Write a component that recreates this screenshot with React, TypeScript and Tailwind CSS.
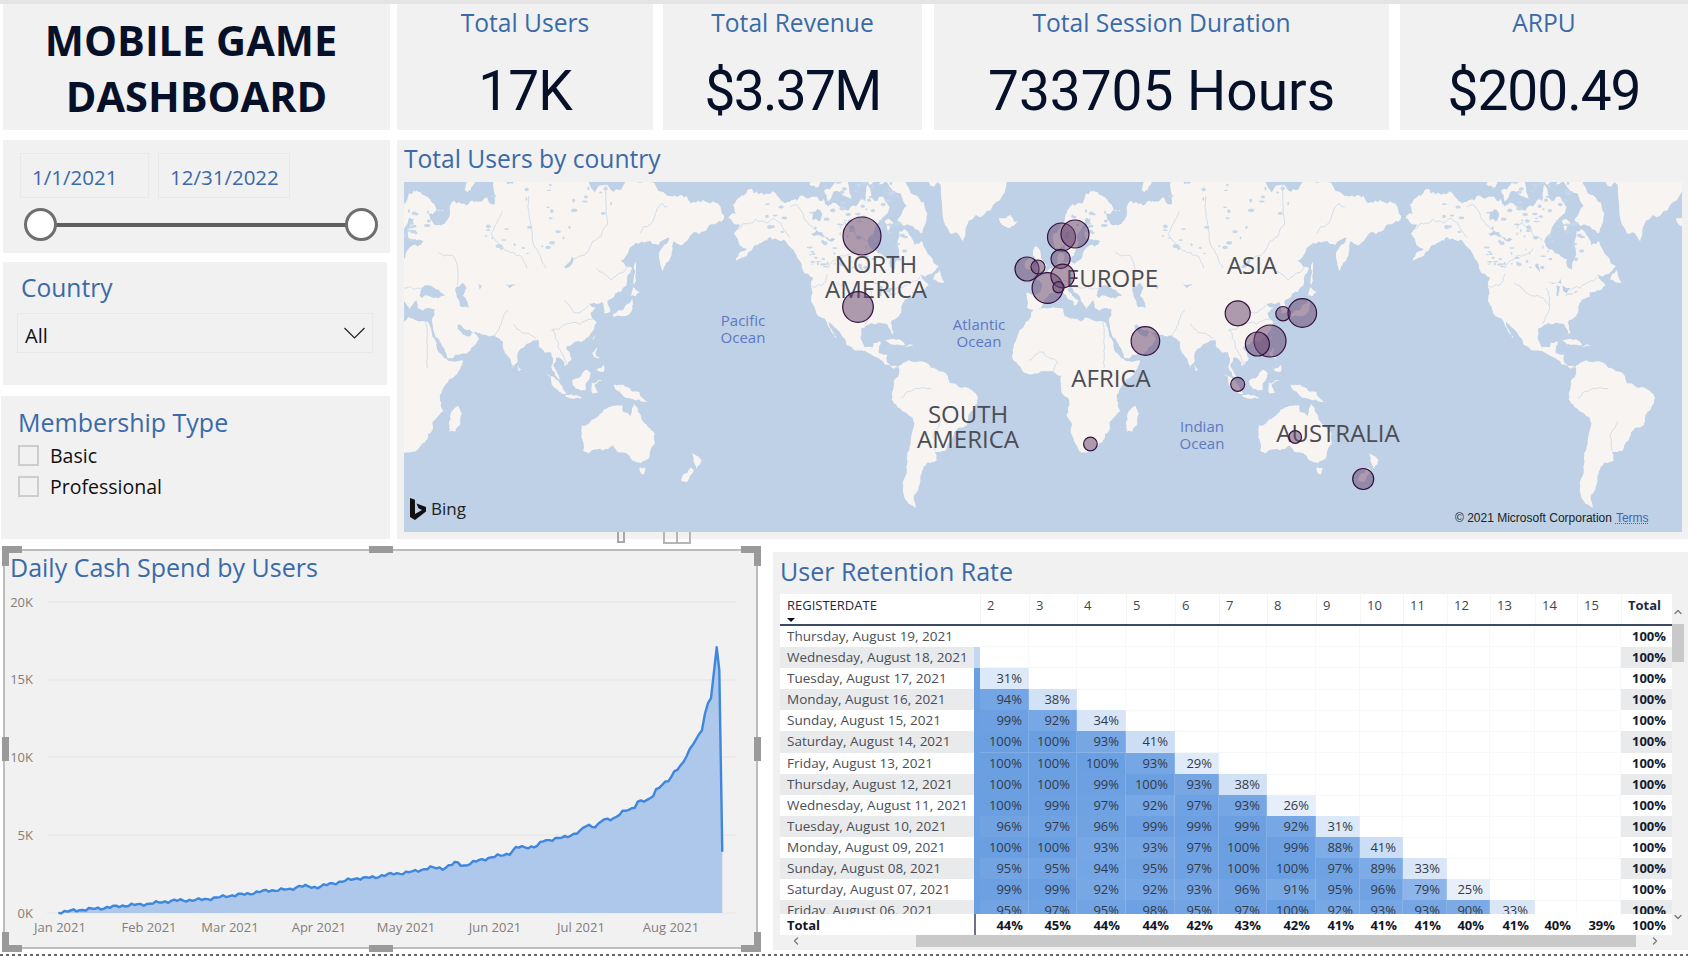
import React from "react";
import { ChevronUp, ChevronDown, ChevronLeft, ChevronRight } from "lucide-react";

type P = [number, number];
const LAND: P[][] = [
  // North America
  [[-168,65.5],[-164,66.5],[-166,68.5],[-161,70],[-156,71.3],[-150,70.5],[-141,69.7],[-135,69],[-128,70],[-120,69.5],[-115,68],[-108,68],[-100,68],[-95,69],[-94,72],[-90,69],[-85,69.5],[-82,68],[-87,65],[-90,63.5],[-94,60],[-93,58.5],[-88,56.5],[-82,55],[-82,52.5],[-79.5,51.5],[-79,54],[-77,56],[-78,59],[-77,62.5],[-72,62],[-69,59],[-65,60],[-61,56],[-56,52.5],[-60,50],[-66,50],[-65,48.5],[-61,46],[-66,44],[-70,43.5],[-70,41.5],[-74,40.5],[-76,37],[-76,35],[-81,31.5],[-80,26],[-81,25],[-82.5,28],[-84,30],[-89,30],[-94,29.5],[-97,28],[-97.5,23],[-95,18.5],[-91,18.5],[-90.5,21],[-87,21.5],[-88,16],[-83.5,15],[-83.5,11],[-80,9],[-77.5,8.5],[-80,7.5],[-85,10],[-88,13],[-94,16],[-100,17],[-105,20],[-106,23],[-112,29],[-114.5,31],[-112,26],[-110,23],[-112,25],[-115,29],[-117,32.5],[-121,34.5],[-124,40],[-124,46],[-123,49],[-128,51],[-131,55],[-135,58.5],[-140,60],[-146,61],[-152,59],[-158,56],[-164,54.5],[-158,58],[-162,59],[-165,62],[-161,64]],
  // South America
  [[-77.5,8.5],[-72,12],[-68,11],[-62,10.5],[-60,8],[-52,5],[-50,0],[-44,-2.5],[-37,-5],[-35,-8],[-39,-15],[-41,-22],[-48,-25.5],[-49,-29],[-53,-34],[-58,-34.5],[-57,-38],[-62,-39],[-65,-43],[-66,-47],[-69,-51],[-68,-55],[-72,-54],[-75,-50],[-73,-42],[-73,-37],[-71,-30],[-70,-18],[-76,-14],[-81,-6],[-80,-2],[-80,1],[-78,3],[-77,7]],
  // Africa
  [[-6,35.8],[3,37],[10,37],[11,33.5],[15,32.5],[20,31],[22,33],[32,31],[34,28],[37,21],[39,15.5],[43,12],[51,12],[47,4],[41,-2],[39,-6],[40.5,-15],[35,-20],[35,-24],[32.5,-26],[31,-30],[26,-34],[20,-34.8],[18,-33],[15,-27],[12,-17],[13.5,-10],[9,-1],[9.5,4],[5,6],[-4,5],[-8,4.5],[-13,9],[-17,14.5],[-16,20],[-13,27],[-9.5,31]],
  // Eurasia
  [[-9,37],[-9.5,43],[-2,43.5],[-1,46],[-4.5,48.5],[2,51],[7,53.5],[8.5,57],[11,56],[10,54],[14,54],[19,54.5],[21,57],[24,59],[30,60],[23,60],[21.5,63],[25,65.5],[22,65.5],[17.5,61],[18.5,59.5],[16,56],[13,55.5],[11,59],[6,58],[5,62],[11,65],[15,68.5],[25,71],[31,70],[41,67],[33,66.5],[38,64],[44,66],[44,68],[54,68.5],[60,69],[68,68.5],[67,72],[72,73],[75,72],[80,73.5],[90,75],[105,77],[113,74],[130,71],[140,72.5],[160,70],[170,70],[180,69],[190,66],[186,64.5],[179,62.5],[170,60],[163,60],[162,56],[157,51],[155.5,57],[163,62],[155,59],[143,59.5],[135,54.5],[141,52],[138,46],[132,43],[128,40],[129.5,36],[126.5,34.5],[126,37.5],[125,39.5],[121.5,39],[118,39],[122,37],[119,35],[122,31],[121,28],[117,23.5],[110,21],[106,19],[109,13],[105,9],[103,13],[100.5,13.5],[99,9],[103.5,1.5],[101,3],[98,8.5],[98,16],[94.5,16],[91,22.5],[87,21],[80,15],[80,11],[77.5,8],[73,17],[72.5,21],[67,24.5],[61,25],[57,26],[52,27.5],[49,30],[48,29],[51,25],[54,24],[56,26],[59.5,22.5],[55,17],[45,13],[43,13],[39,21],[35,28],[34.5,31],[36,36.5],[30,36],[27,37],[26.5,40],[24,38],[22.5,36.5],[20,39.5],[19,42],[14,45.5],[12.5,44.5],[16,41.5],[18.5,40],[16,38],[15.5,40],[10.5,43],[7,43.8],[3,43],[0,39.5],[-2,36.8],[-5.5,36]],
  [[-5.5,50],[1,51.2],[1.5,53],[-1.5,55],[-2,57.5],[-5,58.5],[-6,56],[-3,54],[-5,52],[-3.5,51.3]],
  [[-10,52],[-6,52],[-5.5,54.5],[-8,55.2],[-10,54]],
  [[-24,65.5],[-18,66.3],[-14,65],[-18,63.4],[-22,64]],
  [[-73,78],[-60,82],[-30,83],[-20,80],[-20,72],[-25,69],[-40,65],[-43,60],[-50,62],[-54,67],[-55,72],[-68,76]],
  [[-80,73.7],[-72,71.5],[-62,66.5],[-65,62],[-72,64],[-78,65],[-73,68],[-88,72]],
  [[-117,71],[-105,73],[-102,69.5],[-115,69]],
  [[-125,72],[-118,74.5],[-116,73],[-120,71.5]],
  [[-97,75],[-85,74],[-90,72.5]],
  [[-110,76],[-100,76],[-105,74.5]],
  [[-85,65],[-80,64.5],[-83,62.5]],
  [[-59,48],[-55.5,51.5],[-53,47],[-56,47]],
  [[-85,22],[-80,23],[-74,20],[-78,20]],
  [[-74,19],[-68.5,18.5],[-70,19.8],[-72,20]],
  [[130.5,33.5],[135,33.5],[140,35],[141.5,39],[141,41],[139.5,39],[136,36],[131,34.5]],
  [[140,42],[141.5,45.5],[145,43.5],[143,42]],
  [[142,46],[143,50],[143,54],[142,53],[141.8,48]],
  [[120,23],[121.5,25],[121,22]],
  [[120,16],[122,18.5],[122,14],[124,13],[121,13.5]],
  [[122,7],[126,9.5],[126,6],[124,6]],
  [[109,1],[113,3],[117,7],[119,5],[117.5,1],[116,-4],[111,-3]],
  [[95.5,5.5],[100,2.5],[104,-2],[106,-6],[102,-4.5],[98,1]],
  [[105.5,-6.5],[111,-6.5],[114.5,-8],[106,-7.5]],
  [[119.5,0],[125,1.5],[121,0],[123,-5],[120,-5.5]],
  [[131,-1],[138,-2],[145,-5],[151,-10.5],[147,-10],[142,-9],[138,-8],[133,-4]],
  [[114,-22],[122,-18],[126,-14],[131,-12],[136,-12],[136,-15],[140,-17.5],[142,-11],[146,-19],[153,-26],[153,-31],[150,-37],[146,-39],[141,-38],[138,-35],[135,-34.5],[131,-31.5],[124,-33],[118,-35],[115,-34],[114,-27]],
  [[145,-41],[148,-41],[147.5,-43.5],[146,-43.5]],
  [[173,-35],[178,-38],[175,-41.5],[174,-39]],
  [[172,-41],[174,-42],[170,-46.5],[167,-46],[168,-44]],
  [[49,-12],[50.5,-16],[47,-25],[44,-25],[43.5,-21],[44.5,-16]],
  [[80,9.5],[82,7],[80.5,6]],
  [[52,71],[56,74],[68,77],[60,75],[55,71]],
];
const WATER: P[][] = [
  [[28,42],[28.5,44],[30.5,46],[33,46],[36,45],[38,44.5],[41.5,42],[38,41],[33,42],[29,41.2]],
  [[47,45],[51,47],[53,45],[51,42],[53,40],[54,37],[50,37.5],[49,40],[47.5,43]],
  [[-92,47],[-85,48.5],[-85,46.5],[-89,46.5]],
  [[-87.5,46],[-85.5,45.5],[-86.5,42],[-87.5,42]],
  [[-84,46],[-80,45],[-82,43],[-84,44]],
  [[-83,42],[-76,44],[-79,43]],
  [[-124,62],[-118,62],[-111,60.5],[-117,61]],
  [[-123,67],[-118,66.5],[-119,65],[-123,65]],
  [[-99,53],[-97,53.5],[-96.5,50.5]],
  [[59,46.5],[61,46],[60,44.5]],
  [[104,52],[109,55.5],[110,55],[106,52]],
  [[74,46.5],[79,46.5],[76,45]],
];
const RIVERS: P[][] = [
  [[72,67],[66,62],[70,59],[78,57],[85,52]],
  [[86,70],[88,62],[92,56],[95,52]],
  [[127,72],[128,64],[120,60],[110,55]],
  [[48,46],[48,53],[45,56],[38,57]],
  [[-135,68],[-125,64],[-118,61]],
  [[-163,63],[-150,65],[-140,64.5],[-135,61]],
  [[-95,30],[-91,38],[-93,45]],
  [[-91,38],[-100,42],[-110,47]],
  [[-60,-3],[-70,-4],[-76,-8]],
  [[120,32],[106,30],[98,27]],
  [[118,38],[110,35],[105,40]],
  [[5,6],[7,11],[0,16],[-8,12]],
  [[31,31],[32,20],[32,8]],
  [[140,53],[130,48],[122,52]],
  [[160,68],[150,64],[145,62]],
  [[68,24],[72,32],[75,36]],
  [[90,23],[82,26],[78,30]],
  [[106,10],[102,18],[99,28]],
  [[29,45],[20,45],[10,48]],
  [[-66,49],[-75,45],[-80,44]],
  [[-124,46],[-118,46],[-115,50]],
  [[-58,-34],[-59,-27],[-55,-20]],
  [[-100,58],[-110,55],[-115,52]],
  [[-95,60],[-102,64],[-110,64]],
];

const hash = (i: number) => {
  const v = Math.sin(i * 12.9898) * 43758.5453;
  return v - Math.floor(v);
};
let seed = 1;
const rough = (pts: P[], closed: boolean, levels = 3): P[] => {
  let cur = pts;
  for (let l = 0; l < levels; l++) {
    const next: P[] = [];
    const n = cur.length;
    const end = closed ? n : n - 1;
    for (let i = 0; i < end; i++) {
      const a = cur[i];
      const b = cur[(i + 1) % n];
      next.push(a);
      const dx = b[0] - a[0];
      const dy = b[1] - a[1];
      const k = (hash(seed++) - 0.5) * 0.32;
      next.push([(a[0] + b[0]) / 2 - dy * k, (a[1] + b[1]) / 2 + dx * k]);
    }
    if (!closed) next.push(cur[n - 1]);
    cur = next;
  }
  return cur;
};

const lx = (lon: number, off: number) => 640 + lon * 1.88 + off;
const ly = (lat: number) => 201 - 107.7 * Math.log(Math.tan(Math.PI / 4 + (Math.min(lat, 84) * Math.PI) / 360));
const OFFS = [-677, 0, 677];
const toD = (pts: P[], closed: boolean) => {
  const base = "M" + pts.map(([a, b]) => `${lx(a, 0).toFixed(1)} ${ly(b).toFixed(1)}`).join("L") + (closed ? "Z" : "");
  return base;
};
const landD = LAND.map((p) => toD(rough(p, true), true)).join("");
const waterD = WATER.map((p) => toD(rough(p, true, 2), true)).join("");
const riverD = RIVERS.map((p) => toD(rough(p, false, 3), false)).join("");

const LAKE_BOXES: [number, number, number, number, number][] = [
  [-125, -72, 52, 68, 70],
  [-110, -78, 68, 73, 25],
  [22, 33, 60, 68, 16],
  [12, 20, 59, 66, 8],
  [60, 130, 56, 72, 36],
  [-150, -135, 62, 69, 8],
];
const lakes: [number, number, number, number][] = [];
LAKE_BOXES.forEach(([a, b, c, d, n]) => {
  for (let i = 0; i < n; i++) {
    const lon = a + (b - a) * hash(seed++);
    const lat = c + (d - c) * hash(seed++);
    lakes.push([lx(lon, 0), ly(lat), 0.7 + hash(seed++) * 2.6, 0.6 + hash(seed++) * 1.4]);
  }
});

const BUBBLES: [number, number, number][] = [
  [862,236,19],[858,307,15.3],[1027,269,12],[1047.5,288,15.4],[1061.5,237,14],[1075,234,14],[1060.6,259,9.6],[1062.7,276,11.8],[1058.5,287.3,5.6],[1038,267,7],
  [1145.4,341,14.3],[1237.7,313.3,12.5],[1283,313.7,7.2],[1302.3,313,14.3],[1270,341,16],[1257.4,344,12],[1237.7,384.3,7],[1090.4,444,6.8],[1295.2,437,6.3],[1363.2,479,10.5],
];

const WorldMap = () => (
  <div className="relative mt-[6px] h-[350px] w-[1278px] overflow-hidden bg-[#bed1e6] font-['Open_Sans',sans-serif]">
    <svg className="absolute inset-0" width="1278" height="350" viewBox="0 0 1278 350">
      {OFFS.map((o) => (
        <g key={o} transform={`translate(${o} 0)`}>
          <path d={landD} fill="#f7f4f1" />
          <path d={riverD} fill="none" stroke="#cddbea" strokeWidth="0.9" />
          <path d={waterD} fill="#bed1e6" />
          {lakes.map(([x, y, rx, ry], i) => (
            <ellipse key={i} cx={x} cy={y} rx={rx} ry={ry} fill="#c6d7e9" />
          ))}
        </g>
      ))}
    </svg>
    <span className="absolute left-[472px] top-[94px] -translate-x-1/2 -translate-y-1/2 text-center text-[24px] leading-[25px] text-[#4c4c54]">NORTH<br />AMERICA</span>
    <span className="absolute left-[564px] top-[244px] -translate-x-1/2 -translate-y-1/2 text-center text-[24px] leading-[25px] text-[#4c4c54]">SOUTH<br />AMERICA</span>
    <span className="absolute left-[708px] top-[95px] -translate-x-1/2 -translate-y-1/2 text-[24px] leading-[25px] text-[#4c4c54]">EUROPE</span>
    <span className="absolute left-[848px] top-[82px] -translate-x-1/2 -translate-y-1/2 text-[24px] leading-[25px] text-[#4c4c54]">ASIA</span>
    <span className="absolute left-[707px] top-[195px] -translate-x-1/2 -translate-y-1/2 text-[24px] leading-[25px] text-[#4c4c54]">AFRICA</span>
    <span className="absolute left-[934px] top-[250px] -translate-x-1/2 -translate-y-1/2 text-[24px] leading-[25px] text-[#4c4c54]">AUSTRALIA</span>
    <span className="absolute left-[339px] top-[147px] -translate-x-1/2 -translate-y-1/2 text-center text-[15px] leading-[17px] text-[#5f78c4]">Pacific<br />Ocean</span>
    <span className="absolute left-[575px] top-[151px] -translate-x-1/2 -translate-y-1/2 text-center text-[15px] leading-[17px] text-[#5f78c4]">Atlantic<br />Ocean</span>
    <span className="absolute left-[798px] top-[253px] -translate-x-1/2 -translate-y-1/2 text-center text-[15px] leading-[17px] text-[#5f78c4]">Indian<br />Ocean</span>
    <svg className="absolute inset-0" width="1278" height="350" viewBox="404 182 1278 350">
      {BUBBLES.map(([x, y, r], i) => (
        <circle key={i} cx={x} cy={y} r={r} fill="#6a4670" fillOpacity="0.52" stroke="#34103f" strokeWidth="1.2" />
      ))}
    </svg>
    <div className="absolute left-[6px] top-[316px] flex items-center gap-[5px]">
      <svg width="16" height="22" viewBox="0 0 16 22"><path d="M0 0L5 1.7V16L12 12L8.5 10.3L6.5 5.5L16 9V13.5L5 22L0 19Z" fill="#111" /></svg>
      <span className="text-[17px] leading-[22px] text-[#222]">Bing</span>
    </div>
    <div className="absolute left-[1051px] top-[329px] flex gap-[4px] font-['Liberation_Sans',sans-serif] text-[12px] leading-[14px] text-[#222]">
      <span>© 2021 Microsoft Corporation</span>
      <span className="text-[#3f66b5] underline decoration-dotted">Terms</span>
    </div>
  </div>
);

const BLUE = "text-[#3a6aa8]";
const Kpi = ({ label, value, cls, vcls }: { label: string; value: string; cls: string; vcls: string }) => (
  <div className={`flex h-full flex-col items-center bg-[#f1f1f1] ${cls}`}>
    <div className={`mt-[2px] font-['Open_Sans',sans-serif] text-[24.6px] leading-[34px] ${BLUE}`}>{label}</div>
    <div className={`mt-[18px] font-['Roboto',sans-serif] text-[55px] leading-[66px] text-[#071029] ${vcls}`}>{value}</div>
  </div>
);

// ---- Chart data
const RAW: P[] = ([
  [175,1147],[240,1140],[300,1135],[370,1127],[440,1122],[520,1112],[590,1110],[640,1105],[680,1098],[740,1092],[800,1082],[870,1078],[900,1068],[950,1072],[1000,1060],[1070,1045],[1130,1042],[1140,1037],
] as P[]).map(([x, y]) => [x / 3, y / 3 + 530] as P).concat(([
  [30,1033],[100,1025],[150,1013],[190,1015],[230,997],[250,1008],[300,990],[390,970],[410,952],[470,950],[490,932],[550,923],[600,905],[620,885],[650,890],[665,872],[700,865],[730,845],[760,835],[775,812],[800,815],[820,795],[830,775],[870,750],[885,720],[905,705],[925,670],[940,640],[965,600],[980,530],[995,500],
] as P[]).map(([x, y]) => [x / 3 + 380, y / 3 + 530] as P));
const series: P[] = (() => {
  const out: P[] = [];
  let j = 0;
  const endX = RAW[RAW.length - 1][0];
  for (let x = RAW[0][0], k = 0; x <= endX; x += 3.05, k++) {
    while (j < RAW.length - 2 && RAW[j + 1][0] < x) j++;
    const [x0, y0] = RAW[j];
    const [x1, y1] = RAW[j + 1];
    const y = y0 + ((y1 - y0) * (x - x0)) / (x1 - x0);
    const n = Math.sin(k * 2.3) * 1.0 + Math.sin(k * 0.9 + 1) * 0.7;
    out.push([x, y + n]);
  }
  out.push([380 + 1010 / 3, 530 + 352 / 3], [380 + 1018 / 3, 530 + 420 / 3], [380 + 1027 / 3, 530 + 965 / 3]);
  return out;
})();
const chartLine = series.map(([x, y]) => `${x.toFixed(1)} ${y.toFixed(1)}`).join("L");
const chartArea = `M${series[0][0].toFixed(1)} 913L${chartLine}L${series[series.length - 1][0].toFixed(1)} 913Z`;

const Handle = ({ cls }: { cls: string }) => <div className={`absolute bg-[#9a9a9a] ${cls}`} />;

const Chart = () => (
  <div className="relative ml-[3px] h-[400px] w-[755px] border-2 border-[#bdbdbd] bg-[#f1f1f1] font-['Open_Sans',sans-serif]">
    <div className={`h-[34px] pl-[5px] text-[25px] leading-[32px] ${BLUE}`}>Daily Cash Spend by Users</div>
    <svg width="751" height="362" viewBox="5 585 751 362" className="block">
      {[602, 680, 757, 835, 913].map((y) => (
        <line key={y} x1="47" x2="736" y1={y} y2={y} stroke="#e9e9e9" strokeWidth="1.5" />
      ))}
      {[["20K", 602], ["15K", 679], ["10K", 757], ["5K", 835], ["0K", 913]].map(([t, y]) => (
        <text key={t} x="33" y={Number(y) + 5} textAnchor="end" fontSize="13" fill="#857d76" fontFamily="Open Sans">{t}</text>
      ))}
      {[["Jan 2021", 60], ["Feb 2021", 149], ["Mar 2021", 230], ["Apr 2021", 319], ["May 2021", 406], ["Jun 2021", 495], ["Jul 2021", 581], ["Aug 2021", 671]].map(([t, x]) => (
        <text key={t} x={x} y="932" textAnchor="middle" fontSize="13" fill="#857d76" fontFamily="Open Sans">{t}</text>
      ))}
      <path d={chartArea} fill="#adc8ea" />
      <path d={`M${chartLine}`} fill="none" stroke="#3f87dd" strokeWidth="2.4" strokeLinejoin="round" />
    </svg>
    <Handle cls="left-[-3px] top-[-5px] h-[7px] w-[20px]" />
    <Handle cls="left-[-3px] top-[-5px] h-[20px] w-[7px]" />
    <Handle cls="left-[364px] top-[-5px] h-[7px] w-[24px]" />
    <Handle cls="right-[-5px] top-[-5px] h-[7px] w-[20px]" />
    <Handle cls="right-[-5px] top-[-5px] h-[20px] w-[7px]" />
    <Handle cls="left-[-3px] top-[186px] h-[24px] w-[7px]" />
    <Handle cls="right-[-5px] top-[186px] h-[24px] w-[7px]" />
    <Handle cls="bottom-[-5px] left-[-3px] h-[7px] w-[20px]" />
    <Handle cls="bottom-[-5px] left-[-3px] h-[20px] w-[7px]" />
    <Handle cls="bottom-[-5px] left-[364px] h-[7px] w-[24px]" />
    <Handle cls="bottom-[-5px] right-[-5px] h-[7px] w-[20px]" />
    <Handle cls="bottom-[-5px] right-[-5px] h-[20px] w-[7px]" />
  </div>
);

// ---- Table
const COLS = "grid grid-cols-[194px_6px_49px_48px_49px_49px_44px_48px_49px_44px_43px_44px_43px_45px_42px_44px_51px]";
const ROWS: [string, number[]][] = [
  ["Thursday, August 19, 2021", []],
  ["Wednesday, August 18, 2021", []],
  ["Tuesday, August 17, 2021", [31]],
  ["Monday, August 16, 2021", [94, 38]],
  ["Sunday, August 15, 2021", [99, 92, 34]],
  ["Saturday, August 14, 2021", [100, 100, 93, 41]],
  ["Friday, August 13, 2021", [100, 100, 100, 93, 29]],
  ["Thursday, August 12, 2021", [100, 100, 99, 100, 93, 38]],
  ["Wednesday, August 11, 2021", [100, 99, 97, 92, 97, 93, 26]],
  ["Tuesday, August 10, 2021", [96, 97, 96, 99, 99, 99, 92, 31]],
  ["Monday, August 09, 2021", [100, 100, 93, 93, 97, 100, 99, 88, 41]],
  ["Sunday, August 08, 2021", [95, 95, 94, 95, 97, 100, 100, 97, 89, 33]],
  ["Saturday, August 07, 2021", [99, 99, 92, 92, 93, 96, 91, 95, 96, 79, 25]],
  ["Friday, August 06, 2021", [95, 97, 95, 98, 95, 97, 100, 92, 93, 93, 90, 33]],
];
const HEAD = ["2", "3", "4", "5", "6", "7", "8", "9", "10", "11", "12", "13", "14", "15"];
const TOTALS = [44, 45, 44, 44, 42, 43, 42, 41, 41, 41, 40, 41, 40, 39];
const cellBg = (v: number) => {
  const t = Math.min(1, Math.max(0, (v - 10) / 90));
  const mix = (c: number) => Math.round(255 + (c - 255) * t);
  return `rgb(${mix(106)},${mix(159)},${mix(226)})`;
};

const Retention = () => (
  <div className="ml-[15px] mt-[3px] h-[398px] flex-1 bg-[#f1f1f1] font-['Open_Sans',sans-serif]">
    <div className={`h-[42px] pl-[7px] text-[25px] leading-[38px] ${BLUE}`}>User Retention Rate</div>
    <div className="flex pl-[7px]">
      <div className="w-[892px] bg-white text-[13px]">
        <div className={`${COLS} h-[32px] border-b-2 border-[#3c4a66] leading-[21px] text-[#3f4652]`}>
          <div className="relative col-span-2 pl-[7px] pt-[1px] text-[#1f2a3f]">
            REGISTERDATE
            <span className="absolute bottom-[2px] left-[7px] h-0 w-0 border-x-[4px] border-t-[4px] border-x-transparent border-t-[#111]" />
          </div>
          {HEAD.map((h) => (
            <div key={h} className="border-l border-[#f5f5f5] pl-[6px] pt-[1px]">{h}</div>
          ))}
          <div className="border-l border-[#f5f5f5] pl-[6px] pt-[1px] font-bold text-[#1f2a3f]">Total</div>
        </div>
        <div className="h-[288px] overflow-hidden">
          {ROWS.map(([d, vals], i) => (
            <div key={d} className={`${COLS} h-[21.1px] leading-[21px]`}>
              <div className={`whitespace-nowrap pl-[7px] text-[13.5px] text-[#4a4e57] ${i % 2 ? "bg-[#e9eaec]" : "bg-white"}`}>{d}</div>
              <div style={{ background: i === 0 ? "#fff" : i === 1 ? "#c3d8f0" : "#6a9fe2" }} />
              {HEAD.map((h, j) => {
                const v = vals[j];
                return v === undefined ? (
                  <div key={h} className="border-b border-r border-[#f8f8f8]" />
                ) : (
                  <div key={h} className="border-b border-r border-white/15 pr-[6px] text-right text-[#333a47]" style={{ background: cellBg(v) }}>{v}%</div>
                );
              })}
              <div className={`pr-[6px] text-right font-bold text-[#151c2e] ${i % 2 ? "bg-[#e9eaec]" : "bg-white"}`}>100%</div>
            </div>
          ))}
        </div>
        <div className={`${COLS} h-[21px] leading-[22px] font-bold text-[#0f172a]`}>
          <div className="pl-[7px]">Total</div>
          <div className="border-l-2 border-[#6a7286]" />
          {TOTALS.map((t, j) => (
            <div key={j} className="pr-[6px] text-right">{t}%</div>
          ))}
          <div className="pr-[6px] text-right">100%</div>
        </div>
      </div>
      <div className="flex h-[341px] w-[12px] flex-col items-center">
        <ChevronUp size={12} className="mt-[12px] text-[#777]" strokeWidth={2.5} />
        <div className="mt-[6px] h-[38px] w-[12px] bg-[#c9c9c9]" />
        <ChevronDown size={12} className="mb-[12px] mt-auto text-[#777]" strokeWidth={2.5} />
      </div>
    </div>
    <div className="flex h-[12px] items-center pl-[7px]">
      <div className="w-[136px] pl-[10px]"><ChevronLeft size={12} className="text-[#777]" strokeWidth={2.5} /></div>
      <div className="h-[12px] w-[720px] bg-[#c9c9c9]" />
      <div className="pl-[13px]"><ChevronRight size={12} className="text-[#777]" strokeWidth={2.5} /></div>
    </div>
  </div>
);

export default function App() {
  return (
    <div className="relative h-[956px] w-[1688px] overflow-hidden bg-white">
      <div className="h-[4px] bg-[#e4e4e4]" />
      <div className="flex h-[126px] pl-[3px]">
        <div className="flex h-full w-[387px] flex-col items-center justify-center bg-[#f1f1f1] pt-[2px] font-['Open_Sans',sans-serif] text-[41.5px] font-bold leading-[56px] text-[#061029]">
          <div className="pr-[11px]">MOBILE GAME</div>
          <div>DASHBOARD</div>
        </div>
        <Kpi label="Total Users" value="17K" cls="ml-[7px] w-[256px]" vcls="tracking-[-1px]" />
        <Kpi label="Total Revenue" value="$3.37M" cls="ml-[10px] w-[259px]" vcls="tracking-[-1.7px]" />
        <Kpi label="Total Session Duration" value="733705 Hours" cls="ml-[12px] w-[455px]" vcls="tracking-normal" />
        <Kpi label="ARPU" value="$200.49" cls="ml-[11px] w-[288px]" vcls="tracking-[-1px]" />
      </div>
      <div className="mt-[10px] flex h-[399px] pl-[3px]">
        <div className="flex w-[387px] flex-col font-['Open_Sans',sans-serif]">
          <div className="h-[113px] bg-[#f1f1f1] px-[17px] pt-[13px]">
            <div className={`flex gap-[9px] text-[20.5px] leading-[47px] ${BLUE}`}>
              <div className="h-[45px] w-[129px] border border-[#e8e8e8] pl-[11px]">1/1/2021</div>
              <div className="h-[45px] w-[132px] border border-[#e8e8e8] pl-[11px]">12/31/2022</div>
            </div>
            <div className="relative ml-[20px] mt-[25px] h-[4px] w-[322px] bg-[#5f5f5f]">
              <span className="absolute left-[-16px] top-[-15px] h-[33px] w-[33px] rounded-full border-[3px] border-[#6e6e6e] bg-white" />
              <span className="absolute right-[-16px] top-[-15px] h-[33px] w-[33px] rounded-full border-[3px] border-[#6e6e6e] bg-white" />
            </div>
          </div>
          <div className="mt-[9px] h-[123px] w-[384px] bg-[#f1f1f1] px-[14px]">
            <div className={`pl-[4px] pt-[9px] text-[24.6px] leading-[34px] ${BLUE}`}>Country</div>
            <div className="mt-[8px] flex h-[40px] w-[356px] items-center justify-between border border-[#e8e8e8] pl-[7px] pr-[7px] text-[20px] text-[#111]">
              <span className="pt-[5px]">All</span>
              <svg width="21" height="12" viewBox="0 0 21 12"><path d="M0.5 1L10.5 11L20.5 1" fill="none" stroke="#222" strokeWidth="1.2" /></svg>
            </div>
          </div>
          <div className="ml-[-2px] mt-[11px] h-[143px] w-[389px] bg-[#f1f1f1] pl-[17px]">
            <div className={`pt-[9px] text-[25px] leading-[34px] ${BLUE}`}>Membership Type</div>
            <div className="mt-[6px] flex flex-col gap-[10px] text-[19.5px] leading-[21px] text-[#111]">
              {["Basic", "Professional"].map((t) => (
                <div key={t} className="flex h-[21px] items-center gap-[11px]">
                  <span className="h-[21px] w-[21px] border-2 border-[#cdcdcd]" />
                  <span>{t}</span>
                </div>
              ))}
            </div>
          </div>
        </div>
        <div className="relative ml-[7px] flex-1 bg-[#f1f1f1] pl-[7px] font-['Open_Sans',sans-serif]">
          <div className={`h-[36px] text-[24.6px] leading-[37px] ${BLUE}`}>Total Users by country</div>
          <WorldMap />
          <div className="absolute left-[220px] top-[392px] h-[11px] w-[8px] border-2 border-t-0 border-[#a8a8a8]" />
          <div className="absolute left-[266px] top-[392px] flex h-[12px] w-[28px] border-2 border-t-0 border-[#b5b5b5]"><span className="w-[13px] border-r-2 border-[#b5b5b5]" /></div>
        </div>
      </div>
      <div className="mt-[10px] flex">
        <Chart />
        <Retention />
      </div>
      <div className="absolute bottom-0 left-0 h-[2px] w-full bg-[repeating-linear-gradient(90deg,#666_0_3px,transparent_3px_6px)]" />
    </div>
  );
}
